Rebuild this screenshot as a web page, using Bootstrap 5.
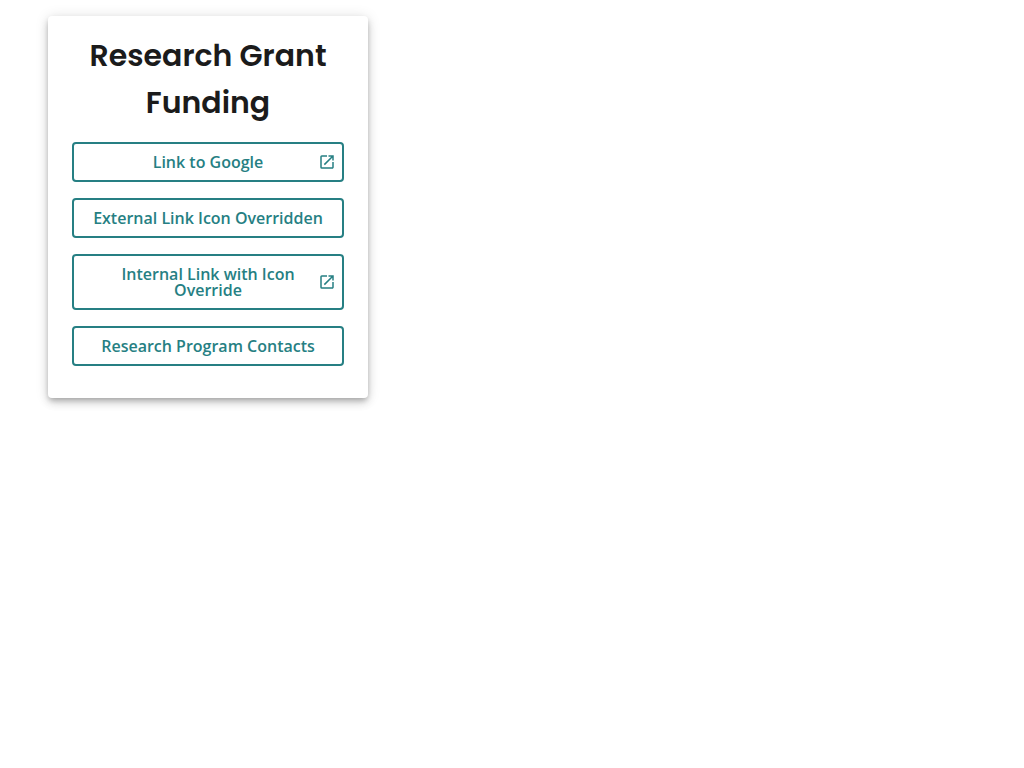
<!DOCTYPE html>
<html lang="en">
<head>
<meta charset="utf-8">
<meta name="viewport" content="width=device-width, initial-scale=1">
<title>Research Grant Funding</title>
<link href="https://cdn.jsdelivr.net/npm/bootstrap@5.3.0/dist/css/bootstrap.min.css" rel="stylesheet">
<style>
  body { font-family: "Open Sans", sans-serif; }
  .link-card {
    max-width: 320px;
    border: 0;
    border-radius: 4px;
    box-shadow: 0 3px 5px -1px rgba(0,0,0,.2), 0 5px 8px 0 rgba(0,0,0,.14), 0 1px 14px 0 rgba(0,0,0,.12);
  }
  .link-card-title {
    font-family: Poppins, Inter, sans-serif;
    font-size: 30px;
    font-weight: 600;
    line-height: 47px;
    color: #1b1b1b;
  }
  .btn-teal {
    --bs-btn-color: #267f83;
    --bs-btn-border-color: #267f83;
    --bs-btn-hover-color: #fff;
    --bs-btn-hover-bg: #267f83;
    --bs-btn-hover-border-color: #267f83;
    --bs-btn-border-width: 2px;
    --bs-btn-border-radius: 4px;
    --bs-btn-font-weight: 600;
    --bs-btn-line-height: 16px;
    --bs-btn-padding-x: 6px;
    --bs-btn-padding-y: 10px;
  }
  .btn-teal.has-icon { padding-left: 24px; }
  .external-icon { width: 18px; height: 18px; margin: -1px 0; }
</style>
</head>
<body>
<main class="px-5 py-3">
  <section class="card link-card">
    <div class="card-body px-4 py-3">
      <h2 class="link-card-title text-center mb-3">Research Grant Funding</h2>
      <nav class="d-flex flex-column gap-3 pb-3">
        <a href="#" class="btn btn-teal has-icon d-flex align-items-center">
          <span class="flex-grow-1">Link to Google</span>
          <svg class="external-icon flex-shrink-0" viewBox="0 0 24 24" fill="currentColor" aria-hidden="true"><path d="M19 19H5V5h7V3H5a2 2 0 0 0-2 2v14a2 2 0 0 0 2 2h14c1.100 0 2-.9 2-2v-7h-2v7zM14 3v2h3.590l-9.830 9.830 1.410 1.410L19 6.410V10h2V3h-7z"/></svg>
        </a>
        <a href="#" class="btn btn-teal">External Link Icon Overridden</a>
        <a href="#" class="btn btn-teal has-icon d-flex align-items-center">
          <span class="flex-grow-1">Internal Link with Icon Override</span>
          <svg class="external-icon flex-shrink-0" viewBox="0 0 24 24" fill="currentColor" aria-hidden="true"><path d="M19 19H5V5h7V3H5a2 2 0 0 0-2 2v14a2 2 0 0 0 2 2h14c1.100 0 2-.9 2-2v-7h-2v7zM14 3v2h3.590l-9.830 9.830 1.410 1.410L19 6.410V10h2V3h-7z"/></svg>
        </a>
        <a href="#" class="btn btn-teal">Research Program Contacts</a>
      </nav>
    </div>
  </section>
</main>
<script src="https://cdn.jsdelivr.net/npm/bootstrap@5.3.0/dist/js/bootstrap.bundle.min.js"></script>
</body>
</html>
